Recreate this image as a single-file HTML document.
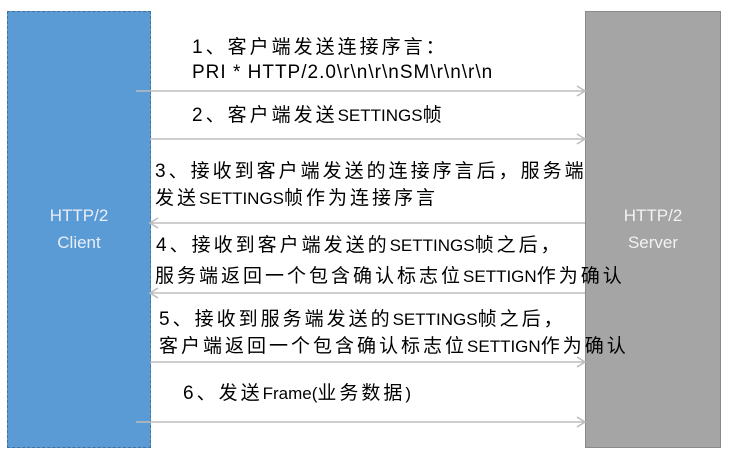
<!DOCTYPE html>
<html><head><meta charset="utf-8"><style>
html,body{margin:0;padding:0;background:#fff;width:734px;height:454px;overflow:hidden;position:relative}
.t{position:absolute;white-space:nowrap;font-family:"Liberation Sans","Noto Sans CJK SC",sans-serif;font-size:19px;letter-spacing:3px;color:#000;line-height:22px}
.l{font-size:17px;letter-spacing:0px}
.box{position:absolute;box-sizing:border-box}
.lbl{position:absolute;width:100%;text-align:center;color:#e8eef7;font-family:"Liberation Sans",sans-serif;font-size:17px;line-height:27px}
</style></head><body>
<div class="box" style="left:7px;top:11px;width:144px;height:437px;background:#5b9bd5;border:1.5px dashed #41719c"><div class="lbl" style="top:190px">HTTP/2<br>Client</div></div>
<div class="box" style="left:585px;top:11px;width:136px;height:437px;background:#a5a5a5;border:1.5px solid #8a8a8a"><div class="lbl" style="top:190px;color:#f2f2f2">HTTP/2<br>Server</div></div>
<svg width="734" height="454" style="position:absolute;left:0;top:0" fill="none" stroke="#bdbdbd" stroke-width="1.6">
<path d="M136 91H585M577 86L585 91L577 96"/>
<path d="M150 139H585M577 134L585 139L577 144"/>
<path d="M150 223H585M158 218L150 223L158 228"/>
<path d="M150 293H585M158 288L150 293L158 298"/>
<path d="M150 362H585M577 357L585 362L577 367"/>
<path d="M136 422H585M577 417L585 422L577 427"/>
</svg>
<div class="t" style="left:192px;top:37px">1、客户端发送连接序言：</div>
<div class="t l" style="left:192px;top:62px;font-size:19px;letter-spacing:1px">PRI * HTTP/2.0\r\n\r\nSM\r\n\r\n</div>
<div class="t" style="left:192px;top:105px">2、客户端发送<span class="l">SETTINGS</span>帧</div>
<div class="t" style="left:155px;top:161px">3、接收到客户端发送的连接序言后，服务端</div>
<div class="t" style="left:155px;top:188px">发送<span class="l">SETTINGS</span>帧作为连接序言</div>
<div class="t" style="left:156px;top:235px">4、接收到客户端发送的<span class="l">SETTINGS</span>帧之后，</div>
<div class="t" style="left:155px;top:266px">服务端返回一个包含确认标志位<span class="l">SETTIGN</span>作为确认</div>
<div class="t" style="left:159px;top:309px">5、接收到服务端发送的<span class="l">SETTINGS</span>帧之后，</div>
<div class="t" style="left:159px;top:336px">客户端返回一个包含确认标志位<span class="l">SETTIGN</span>作为确认</div>
<div class="t" style="left:183px;top:383px">6、发送<span class="l">Frame(</span>业务数据<span class="l">)</span></div>
</body></html>
